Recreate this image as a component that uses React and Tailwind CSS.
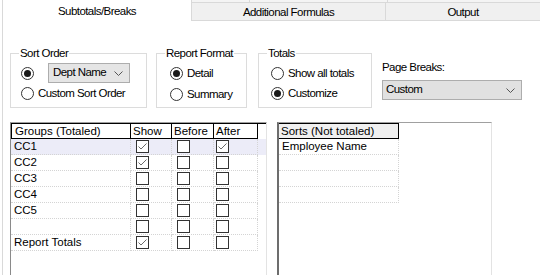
import React from "react";

const ui = "font-['Liberation_Sans',Arial,sans-serif] text-[11.5px] tracking-[-0.55px] text-black";
const gridFont = "font-['Liberation_Sans',Arial,sans-serif] text-[11.5px] tracking-normal text-black";

function Radio({ checked }) {
  return (
    <span className="flex h-[13px] w-[13px] shrink-0 items-center justify-center rounded-full border border-[#333] bg-white">
      {checked && <span className="h-[7px] w-[7px] rounded-full bg-[#1a1a1a]" />}
    </span>
  );
}

function RadioRow({ checked, label, className = "" }) {
  return (
    <div className={"flex h-[16px] items-center gap-[4px] " + className}>
      <Radio checked={checked} />
      {label && <span className="leading-[16px]">{label}</span>}
    </div>
  );
}

function Chevron() {
  return (
    <svg width="9" height="5" viewBox="0 0 9 5" className="shrink-0">
      <polyline points="0.5,0.5 4.5,4.5 8.5,0.5" fill="none" stroke="#555" strokeWidth="1" />
    </svg>
  );
}

function Select({ value, className = "" }) {
  return (
    <div
      className={
        "flex items-center justify-between border border-[#adadad] bg-[#e1e1e1] pl-[3px] pr-[6px] " + className
      }
    >
      <span>{value}</span>
      <Chevron />
    </div>
  );
}

function Check({ checked }) {
  return (
    <span className="flex h-[13px] w-[13px] items-center justify-center border border-[#333] bg-white">
      {checked && (
        <svg width="11" height="11" viewBox="0 0 11 11">
          <polyline points="1.5,5.5 4,8 9.5,2.5" fill="none" stroke="#6b6b6b" strokeWidth="1" />
        </svg>
      )}
    </span>
  );
}

function GroupBox({ title, className = "", children }) {
  return (
    <fieldset className={"m-0 border border-[#dcdcdc] p-0 " + className}>
      <legend className="ml-[8px] px-[1px] leading-[13px]">{title}</legend>
      {children}
    </fieldset>
  );
}

const groups = [
  { name: "CC1", show: true, before: false, after: true, hl: true },
  { name: "CC2", show: true, before: false, after: false },
  { name: "CC3", show: false, before: false, after: false },
  { name: "CC4", show: false, before: false, after: false },
  { name: "CC5", show: false, before: false, after: false },
  { name: "", show: false, before: false, after: false },
  { name: "Report Totals", show: true, before: false, after: false },
];

const dot = "border-r border-b border-dotted border-[#d4d4d4]";

export default function App() {
  return (
    <div className={"h-[275px] w-[540px] overflow-hidden bg-white " + ui}>
      {/* tab strip */}
      <div className="flex h-[21px]">
        <div className="w-[2px]" />
        <div className="w-[190px] border-x border-[#d9d9d9] bg-white pt-[4px] text-center leading-[14px]">
          Subtotals/Breaks
        </div>
        <div className="flex flex-1 flex-col">
          <div className="flex h-[3px] border-b border-[#d9d9d9] bg-[#f4f4f4]">
            <span className="w-[58px] border-r border-[#d9d9d9]" />
            <span className="w-[138px] border-r border-[#d9d9d9]" />
          </div>
          <div className="flex h-[18px]">
            <div className="w-[194px] border-b border-r border-[#d9d9d9] bg-[#f0f0f0] pt-[2px] text-center leading-[14px]">
              Additional Formulas
            </div>
            <div className="flex-1 border-b border-[#d9d9d9] bg-[#f0f0f0] pt-[2px] text-center leading-[14px]">
              Output
            </div>
          </div>
        </div>
      </div>

      {/* page */}
      <div className="ml-[2px] h-[254px] border-l border-[#d9d9d9]">
        <div className="flex pl-[7px] pt-[26px]">
          <GroupBox title="Sort Order" className="h-[61px] w-[137px]">
            <div className="pl-[10px]">
              <div className="mt-[3px] flex h-[20px] items-center">
                <Radio checked />
                <Select value="Dept Name" className="ml-[14px] h-[20px] w-[82px] bg-[#e5e5e5] pl-[4px]" />
              </div>
              <RadioRow label="Custom Sort Order" className="mt-[2px]" />
            </div>
          </GroupBox>

          <GroupBox title="Report Format" className="ml-[9px] h-[61px] w-[91px]">
            <div className="pl-[13px]">
              <RadioRow checked label="Detail" className="mt-[5px]" />
              <RadioRow label="Summary" className="mt-[5px]" />
            </div>
          </GroupBox>

          <GroupBox title="Totals" className="ml-[11px] h-[61px] w-[114px]">
            <div className="pl-[12px]">
              <RadioRow label="Show all totals" className="mt-[5px]" />
              <RadioRow checked label="Customize" className="mt-[4px]" />
            </div>
          </GroupBox>

          <div className="ml-[10px] flex flex-col">
            <span className="mt-[14px] leading-[13px]">Page Breaks:</span>
            <Select value="Custom" className="mt-[6px] h-[20px] w-[140px]" />
          </div>
        </div>

        {/* grids */}
        <div className={"mt-[14px] flex pl-[7px] " + gridFont}>
          <div className="h-[160px] w-[257px] border-l border-t border-r border-l-[#8a8a8a] border-t-[#a0a0a0] border-r-[#e3e3e3]">
            <div className="grid grid-cols-[119px_41px_42px_44px] border-l border-t border-black bg-white leading-[14px]">
              <div className="border-b border-r border-black pl-[3px]">Groups (Totaled)</div>
              <div className="border-b border-r border-black pl-[2px]">Show</div>
              <div className="border-b border-r border-black pl-[2px]">Before</div>
              <div className="border-b border-r border-black pl-[2px]">After</div>
            </div>
            {groups.map((g, i) => (
              <div key={i} className={"flex h-[16px] " + (g.hl ? "bg-[#ececf8]" : "")}>
                <div className="grid grid-cols-[120px_41px_42px_44px]">
                  <div className={dot + " pl-[3px] leading-[15px]"}>{g.name}</div>
                  <div className={dot + " flex items-center pl-[5px]"}>
                    <Check checked={g.show} />
                  </div>
                  <div className={dot + " flex items-center pl-[5px]"}>
                    <Check checked={g.before} />
                  </div>
                  <div className={dot + " flex items-center pl-[2px]"}>
                    <Check checked={g.after} />
                  </div>
                </div>
              </div>
            ))}
          </div>

          <div className="ml-[10px] h-[160px] w-[215px] border-l-2 border-t border-r border-l-[#6d6d6d] border-t-[#a0a0a0] border-r-[#e3e3e3]">
            <div className="w-[120px] border-y border-r border-black bg-[#f0f0f0] pl-[2px] leading-[14px]">
              Sorts (Not totaled)
            </div>
            {["Employee Name", "", "", ""].map((s, i) => (
              <div key={i} className={"h-[16px] w-[120px] pl-[3px] leading-[15px] " + dot}>
                {s}
              </div>
            ))}
          </div>
        </div>
      </div>
    </div>
  );
}
